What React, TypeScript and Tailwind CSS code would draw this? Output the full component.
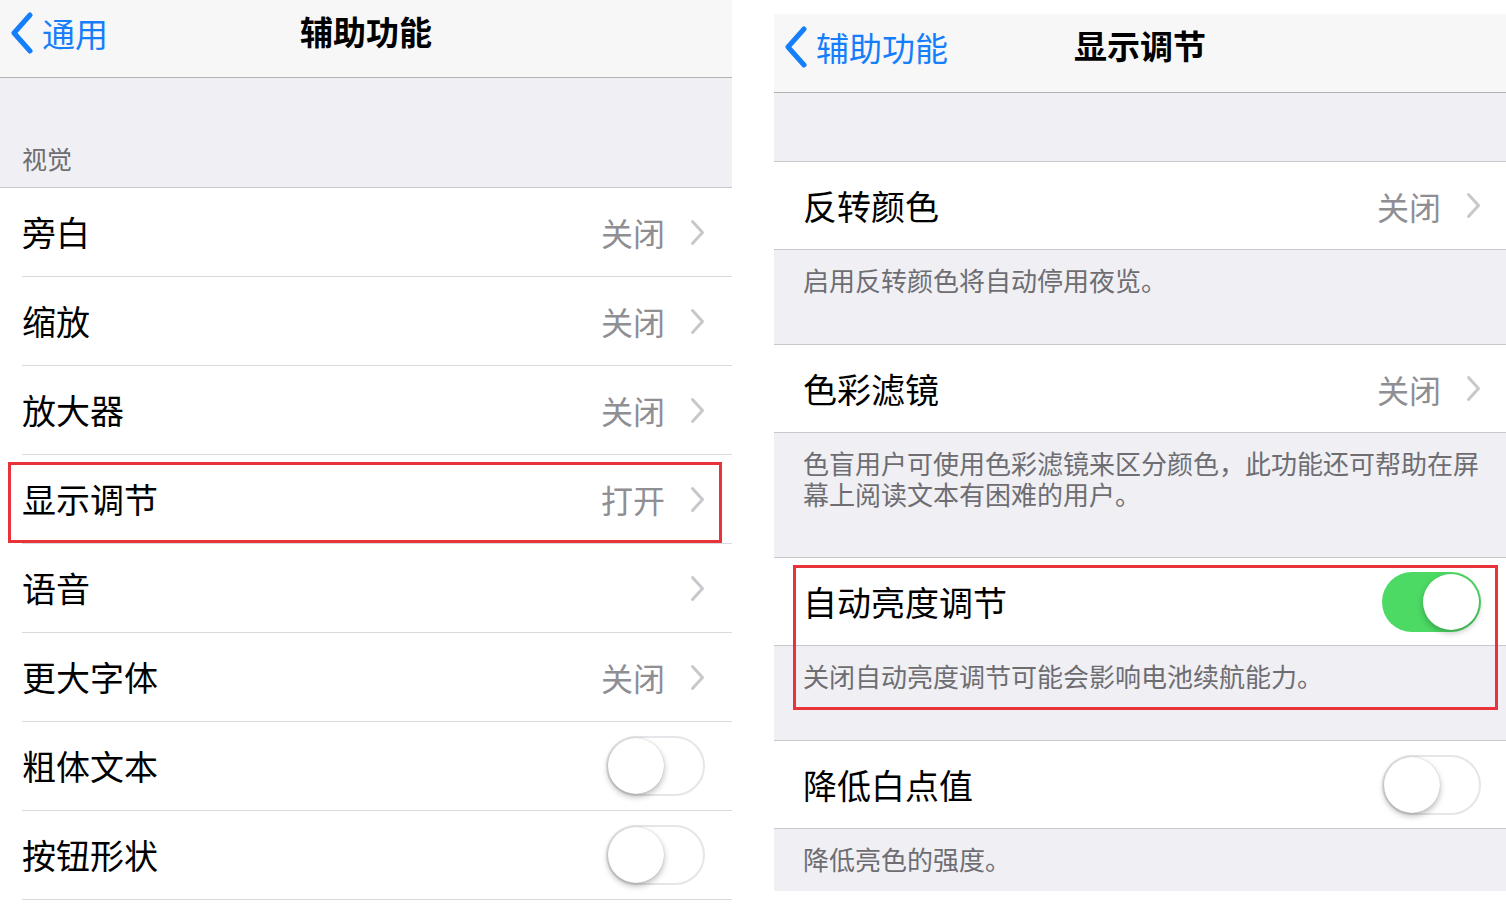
import React from 'react';

const FONT = { fontFamily: '"Noto Sans CJK SC", "Noto Sans", sans-serif' };

function Chevron() {
  return (
    <svg width="15" height="27" viewBox="0 0 15 27" fill="none">
      <path d="M2.5 2.5 L12.5 13.5 L2.5 24.5" stroke="#c7c7cc" strokeWidth="3" strokeLinecap="round" strokeLinejoin="round" />
    </svg>
  );
}

function BackChevron() {
  return (
    <svg width="26" height="42" viewBox="0 0 26 42" fill="none">
      <path d="M21 3 L5 21 L21 39" stroke="#157efb" strokeWidth="5" strokeLinecap="round" strokeLinejoin="round" />
    </svg>
  );
}

function Toggle({ on }: { on: boolean }) {
  if (on) {
    return (
      <div className="relative w-[99px] h-[60px] rounded-full bg-[#4cd964]">
        <div className="absolute right-[2px] top-[2px] w-[56px] h-[56px] rounded-full bg-white shadow-[0_3px_6px_rgba(0,0,0,0.25)]" />
      </div>
    );
  }
  return (
    <div className="relative w-[99px] h-[60px] rounded-full bg-white border-2 border-[#e5e5ea]">
      <div className="absolute left-0 top-0 w-[56px] h-[56px] rounded-full bg-white shadow-[0_3px_6px_rgba(0,0,0,0.28),0_0_1px_rgba(0,0,0,0.25)]" />
    </div>
  );
}

const LEFT_ROWS: { label: string; value?: string; chevron?: boolean; toggle?: boolean; boxed?: boolean }[] = [
  { label: '旁白', value: '关闭', chevron: true },
  { label: '缩放', value: '关闭', chevron: true },
  { label: '放大器', value: '关闭', chevron: true },
  { label: '显示调节', value: '打开', chevron: true, boxed: true },
  { label: '语音', chevron: true },
  { label: '更大字体', value: '关闭', chevron: true },
  { label: '粗体文本', toggle: true },
  { label: '按钮形状', toggle: true },
];

// nav bar: text sits in the upper part, the way it does in the shot
function NavBar({ back, title, h }: { back: string; title: string; h: string }) {
  return (
    <div className={`relative ${h} bg-[#f7f7f8] border-b border-[#b2b2b2] flex items-start justify-center pt-[15px]`}>
      <div className="absolute left-[9px] top-[12px] flex items-center gap-[7px]">
        <BackChevron />
        <span className="text-[33px] leading-none text-[#157efb]">{back}</span>
      </div>
      <span className="text-[33px] leading-none font-bold text-black">{title}</span>
    </div>
  );
}

function LeftPanel() {
  return (
    <div className="w-[732px] flex flex-col">
      <NavBar back="通用" title="辅助功能" h="h-[78px]" />
      <div className="h-[109px] bg-[#efeff4] flex items-end px-[22px] pb-[16px]">
        <span className="text-[25px] leading-none text-[#6d6d72]">视觉</span>
      </div>
      <div className="bg-white border-t border-[#c8c7cc]">
        {LEFT_ROWS.map((row) => (
          <div key={row.label} className="relative pl-[22px]">
            <div className="h-[89px] border-b border-[#d9d9de] flex items-center pr-[27px]">
              <span className="flex-1 text-[34px] leading-none text-black">{row.label}</span>
              {row.value && <span className="text-[32px] leading-none text-[#8e8e93] mr-[25px]">{row.value}</span>}
              {row.chevron && <Chevron />}
              {row.toggle && <Toggle on={false} />}
            </div>
            {row.boxed && (
              <div className="absolute left-[8px] right-[10px] top-[7px] h-[81px] border-[3px] border-[#e8333a]" />
            )}
          </div>
        ))}
      </div>
    </div>
  );
}

function Cell({ children }: { children: React.ReactNode }) {
  return (
    <div className="h-[89px] bg-white border-y border-[#c8c7cc] flex items-center pl-[29px] pr-[25px]">
      {children}
    </div>
  );
}

function Footer({ text, h }: { text: string; h: string }) {
  return (
    <div className={`${h} bg-[#efeff4] pl-[29px] pr-[20px] pt-[14px]`}>
      <p className="text-[26px] leading-[31px] text-[#6d6d72]">{text}</p>
    </div>
  );
}

function RightPanel() {
  return (
    <div className="w-[732px] mt-[14px] flex flex-col">
      <NavBar back="辅助功能" title="显示调节" h="h-[79px]" />
      <div className="h-[68px] bg-[#efeff4]" />
      <Cell>
        <span className="flex-1 text-[34px] leading-none text-black">反转颜色</span>
        <span className="text-[32px] leading-none text-[#8e8e93] mr-[25px]">关闭</span>
        <Chevron />
      </Cell>
      <Footer text="启用反转颜色将自动停用夜览。" h="h-[94px]" />
      <Cell>
        <span className="flex-1 text-[34px] leading-none text-black">色彩滤镜</span>
        <span className="text-[32px] leading-none text-[#8e8e93] mr-[25px]">关闭</span>
        <Chevron />
      </Cell>
      <Footer text="色盲用户可使用色彩滤镜来区分颜色，此功能还可帮助在屏幕上阅读文本有困难的用户。" h="h-[124px]" />
      <div className="relative">
        <Cell>
          <span className="flex-1 text-[34px] leading-none text-black">自动亮度调节</span>
          <Toggle on={true} />
        </Cell>
        <Footer text="关闭自动亮度调节可能会影响电池续航能力。" h="h-[94px]" />
        <div className="absolute left-[19px] right-[8px] top-[8px] h-[145px] border-[3px] border-[#e8333a]" />
      </div>
      <Cell>
        <span className="flex-1 text-[34px] leading-none text-black">降低白点值</span>
        <Toggle on={false} />
      </Cell>
      <Footer text="降低亮色的强度。" h="h-[62px]" />
    </div>
  );
}

export default function App() {
  return (
    <div className="w-[1506px] h-[912px] bg-white flex gap-[42px] overflow-hidden" style={FONT}>
      <LeftPanel />
      <RightPanel />
    </div>
  );
}
